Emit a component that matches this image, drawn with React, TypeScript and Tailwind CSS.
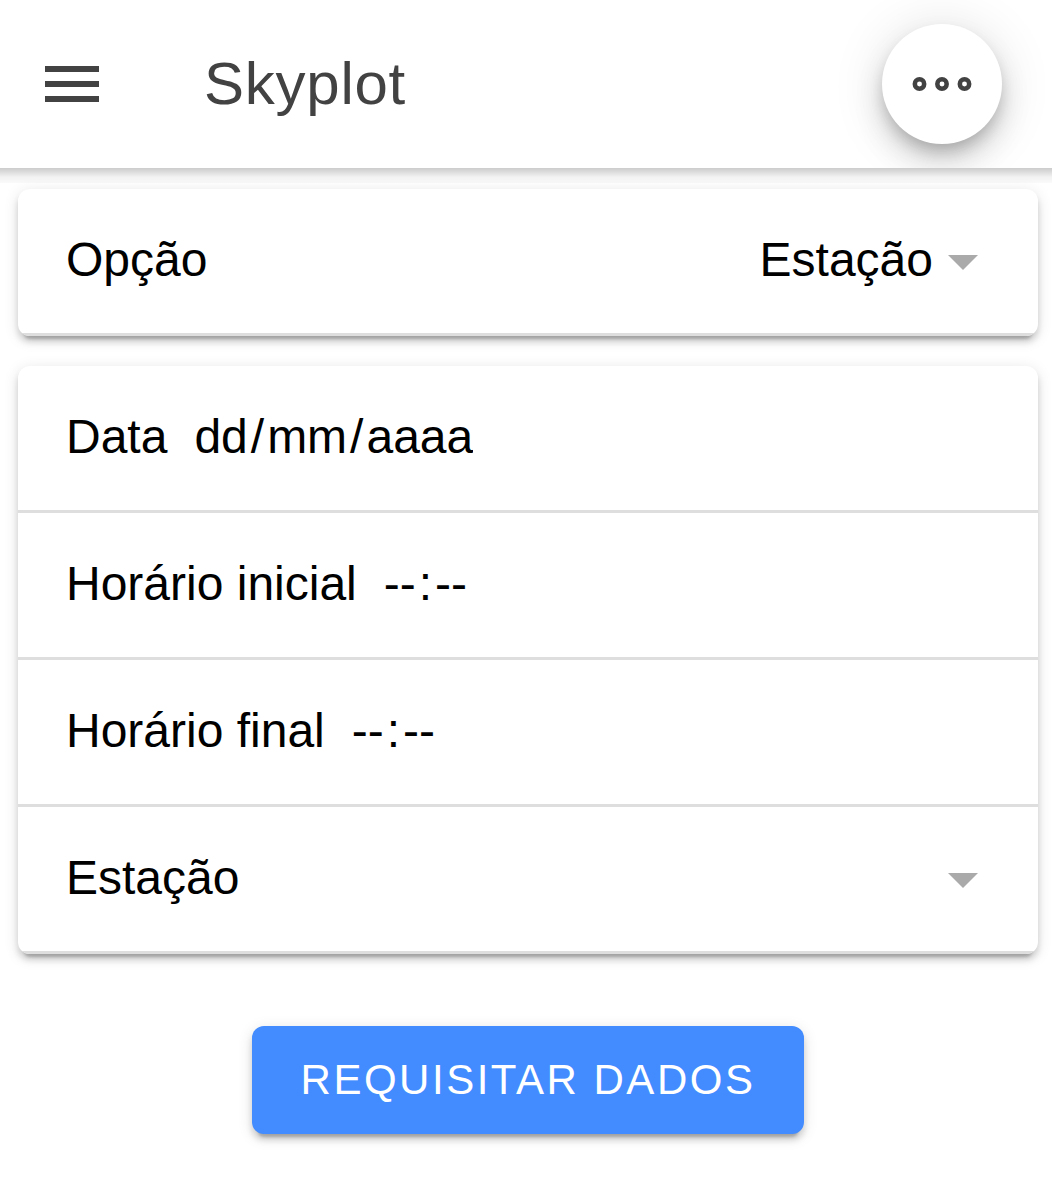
import React from "react";

const CARD_SHADOW =
  "shadow-[0_9px_3px_-6px_rgba(0,0,0,0.2),0_6px_6px_0_rgba(0,0,0,0.14),0_3px_15px_0_rgba(0,0,0,0.12)]";

function Caret() {
  return (
    <svg
      className="pointer-events-none h-[22px] w-[30px] shrink-0 fill-[#aaaaaa]"
      viewBox="0 0 30 22"
      aria-hidden="true"
    >
      <path d="M0 6h30L15 21z" />
    </svg>
  );
}

function Card({ children }: { children: React.ReactNode }) {
  return (
    <section className={`overflow-hidden rounded-xl bg-white ${CARD_SHADOW}`}>{children}</section>
  );
}

function Row({ children }: { children: React.ReactNode }) {
  return (
    <div className="flex items-center border-b-3 border-[#dedede] px-12 pt-[43px] pb-[45px]">
      {children}
    </div>
  );
}

function SelectRow({ id, label, options }: { id: string; label: string; options: string[] }) {
  return (
    <Row>
      <label htmlFor={id} className="flex-1">
        {label}
      </label>
      <div className="flex items-center gap-[15px] pr-3">
        <select
          id={id}
          className="field-sizing-content h-14 cursor-pointer appearance-none bg-transparent outline-none"
        >
          {options.map((option) => (
            <option key={option}>{option}</option>
          ))}
        </select>
        <Caret />
      </div>
    </Row>
  );
}

type Part = { name: string; hint: string };

function SegmentedRow({
  id,
  label,
  separator,
  parts,
}: {
  id: string;
  label: string;
  separator: string;
  parts: Part[];
}) {
  return (
    <Row>
      <label htmlFor={`${id}-0`}>{label}</label>
      <div role="group" aria-label={label} className="ml-6 flex">
        {parts.map((part, i) => (
          <React.Fragment key={part.name}>
            {i > 0 && <span>{separator}</span>}
            <input
              id={`${id}-${i}`}
              type="text"
              inputMode="numeric"
              aria-label={`${label}: ${part.name}`}
              placeholder={part.hint}
              maxLength={part.hint.length}
              className="field-sizing-content h-14 bg-transparent px-[3px] outline-none placeholder:text-black"
            />
          </React.Fragment>
        ))}
      </div>
    </Row>
  );
}

const TIME_PARTS: Part[] = [
  { name: "horas", hint: "--" },
  { name: "minutos", hint: "--" },
];

const DATE_PARTS: Part[] = [
  { name: "dia", hint: "dd" },
  { name: "mês", hint: "mm" },
  { name: "ano", hint: "aaaa" },
];

export default function App() {
  return (
    <div className="min-h-screen bg-white font-['Liberation_Sans',Arial,sans-serif] text-[48px] leading-[56px] text-black">
      <header className="relative z-10 text-[#424242] after:pointer-events-none after:absolute after:inset-x-0 after:top-full after:h-[15px] after:bg-[linear-gradient(to_bottom,rgba(0,0,0,0.2),rgba(0,0,0,0.14)_25%,rgba(0,0,0,0.05)_60%,rgba(0,0,0,0.02))]">
        <div className="flex items-center overflow-hidden bg-white py-6 pr-[50px] pl-[45px]">
          <button type="button" aria-label="Menu" className="cursor-pointer">
            <svg className="h-9 w-[54px] fill-current" viewBox="0 0 54 36" aria-hidden="true">
              <path d="M0 0h54v6H0zM0 15h54v6H0zM0 30h54v6H0z" />
            </svg>
          </button>
          <h1 className="ml-[105px] flex-1 text-[60px] leading-[72px] tracking-[0.0125em]">
            Skyplot
          </h1>
          <button
            type="button"
            aria-label="Mais opções"
            className="flex size-[120px] cursor-pointer items-center justify-center rounded-full bg-white shadow-[0_9px_15px_-3px_rgba(0,0,0,0.2),0_18px_30px_0_rgba(0,0,0,0.14),0_3px_54px_0_rgba(0,0,0,0.12)]"
          >
            <svg
              className="h-4 w-[60px] fill-none stroke-current"
              viewBox="0 0 60 16"
              strokeWidth="4.5"
              aria-hidden="true"
            >
              <circle cx="7.5" cy="8" r="4.7" />
              <circle cx="30" cy="8" r="4.7" />
              <circle cx="52.5" cy="8" r="4.7" />
            </svg>
          </button>
        </div>
      </header>

      <main>
        <form
          className="flex flex-col gap-[30px] pt-[21px] pr-[14px] pb-[45px] pl-[18px]"
          onSubmit={(event) => event.preventDefault()}
        >
          <Card>
            <SelectRow id="opcao" label="Opção" options={["Estação"]} />
          </Card>

          <Card>
            <SegmentedRow id="data" label="Data" separator="/" parts={DATE_PARTS} />
            <SegmentedRow id="inicio" label="Horário inicial" separator=":" parts={TIME_PARTS} />
            <SegmentedRow id="fim" label="Horário final" separator=":" parts={TIME_PARTS} />
            <SelectRow id="estacao" label="Estação" options={[""]} />
          </Card>

          <button
            type="submit"
            className={`mt-[42px] cursor-pointer self-center rounded-xl bg-[#428cff] px-[49px] py-[30px] text-[42px] leading-12 tracking-[0.06em] text-white uppercase ${CARD_SHADOW}`}
          >
            Requisitar dados
          </button>
        </form>
      </main>
    </div>
  );
}
